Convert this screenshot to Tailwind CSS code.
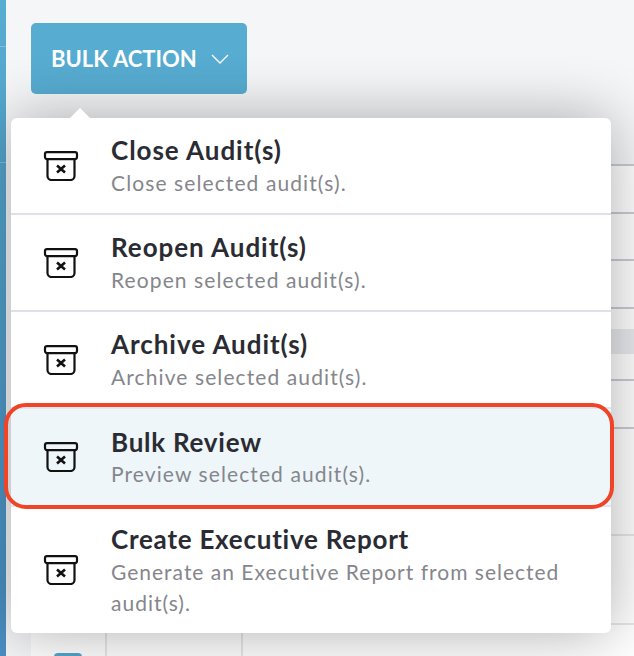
<!doctype html>
<html>
<head>
<meta charset="utf-8">
<script src="https://cdn.jsdelivr.net/npm/@tailwindcss/browser@4"></script>
</head>
<body class="font-['Lato',sans-serif]">
<div class="relative flex w-[634px] h-[656px] overflow-hidden bg-[#f5f6f8]">
  <!-- sidebar edge -->
  <div class="w-[6px] shrink-0 bg-gradient-to-b from-[#57acd1] to-[#4a8fc4]">
    <div class="h-[47px] border-b border-[#7fbedb]"></div>
    <div class="h-[116px] border-b border-[#7fbedb]"></div>
  </div>

  <!-- page behind the menu -->
  <div class="flex-1 pl-[25px] pt-[23px]">
    <button class="flex items-center w-[216px] h-[71px] pl-[20px] gap-[14px] rounded-[5px] bg-[#57acd1] text-white text-[22px] font-bold">
      BULK ACTION
      <svg width="18" height="10" viewBox="0 0 18 10" fill="none" stroke="currentColor" stroke-width="1.4"><path d="M1 1l8 8 8-8"/></svg>
    </button>
    <!-- table rows -->
    <div class="flex flex-col">
      <div class="h-[72px] border-b-2 border-[#c9ccd6]"></div>
      <div class="h-[48px] bg-white border-b-2 border-[#c9ccd6]"></div>
      <div class="h-[47px] bg-white border-b-2 border-[#c9ccd6]"></div>
      <div class="h-[48px] bg-white border-b-2 border-[#c9ccd6]"></div>
      <div class="h-[20px] bg-white"></div>
      <div class="h-[25px] bg-[#e8eaee]"></div>
      <div class="h-[27px] bg-white border-b-2 border-[#c9ccd6]"></div>
      <div class="h-[48px] bg-white border-b-2 border-[#c9ccd6]"></div>
      <div class="h-[107px] bg-white border-b-2 border-[#e6e7ea]"></div>
      <div class="h-[89px] bg-white border-b-2 border-[#e6e7ea]"></div>
      <div class="flex h-[31px] bg-white">
        <div class="flex justify-center w-[76px] pt-[28px] border-r-2 border-[#e6e7ea]">
          <div class="w-[28px] h-[28px] rounded-[4px] bg-[#52a5cb]"></div>
        </div>
        <div class="w-[136px] border-r-2 border-[#e6e7ea]"></div>
      </div>
    </div>
  </div>

  <!-- menu -->
  <div class="absolute left-[11px] top-[118px] w-[600px] h-[515px] rounded-[6px] bg-white shadow-[0_0_60px_rgba(0,0,0,0.32)]">
    <div class="absolute left-[58px] -top-[10px] w-0 h-0 border-x-[11px] border-x-transparent border-b-[11px] border-b-white"></div>

    <div class="flex flex-col">
      <div class="flex items-center h-[97px] border-b-2 border-[#dfe1ea]">
        <div class="w-[100px] shrink-0 flex justify-center">
          <svg width="36" height="30" viewBox="0 0 36 30" fill="none" stroke="#111" stroke-width="2.2" stroke-linejoin="round"><rect x="2" y="1.100" width="32" height="7" rx="2"/><path d="M4.500 8.100V25a4 4 0 0 0 4 4h19a4 4 0 0 0 4-4V8.100"/><path d="M14 14.500l8 7M22 14.500l-8 7" stroke-width="2.600"/></svg>
        </div>
        <div class="pt-[1px]">
          <div class="text-[26px] leading-[32px] font-bold tracking-[0.95px] text-[#2a2b33]">Close Audit(s)</div>
          <div class="mt-[1px] text-[21px] leading-[31px] tracking-[1.1px] text-[#85868c]">Close selected audit(s).</div>
        </div>
      </div>
      <div class="flex items-center h-[97px] border-b-2 border-[#dfe1ea]">
        <div class="w-[100px] shrink-0 flex justify-center">
          <svg width="36" height="30" viewBox="0 0 36 30" fill="none" stroke="#111" stroke-width="2.2" stroke-linejoin="round"><rect x="2" y="1.100" width="32" height="7" rx="2"/><path d="M4.500 8.100V25a4 4 0 0 0 4 4h19a4 4 0 0 0 4-4V8.100"/><path d="M14 14.500l8 7M22 14.500l-8 7" stroke-width="2.600"/></svg>
        </div>
        <div>
          <div class="text-[26px] leading-[32px] font-bold tracking-[0.95px] text-[#2a2b33]">Reopen Audit(s)</div>
          <div class="mt-[1px] text-[21px] leading-[31px] tracking-[1.1px] text-[#85868c]">Reopen selected audit(s).</div>
        </div>
      </div>
      <div class="flex items-center h-[97px] border-b-2 border-[#dfe6ee]">
        <div class="w-[100px] shrink-0 flex justify-center">
          <svg width="36" height="30" viewBox="0 0 36 30" fill="none" stroke="#111" stroke-width="2.2" stroke-linejoin="round"><rect x="2" y="1.100" width="32" height="7" rx="2"/><path d="M4.500 8.100V25a4 4 0 0 0 4 4h19a4 4 0 0 0 4-4V8.100"/><path d="M14 14.500l8 7M22 14.500l-8 7" stroke-width="2.600"/></svg>
        </div>
        <div class="pt-[1px]">
          <div class="text-[26px] leading-[32px] font-bold tracking-[0.95px] text-[#2a2b33]">Archive Audit(s)</div>
          <div class="mt-[1px] text-[21px] leading-[31px] tracking-[1.1px] text-[#85868c]">Archive selected audit(s).</div>
        </div>
      </div>
      <!-- highlighted row -->
      <div class="relative flex items-center h-[98px] bg-[#eef6fa] border-b-2 border-[#dfe6ee]">
        <div class="w-[100px] shrink-0 flex justify-center">
          <svg width="36" height="30" viewBox="0 0 36 30" fill="none" stroke="#111" stroke-width="2.2" stroke-linejoin="round"><rect x="2" y="1.100" width="32" height="7" rx="2"/><path d="M4.500 8.100V25a4 4 0 0 0 4 4h19a4 4 0 0 0 4-4V8.100"/><path d="M14 14.500l8 7M22 14.500l-8 7" stroke-width="2.600"/></svg>
        </div>
        <div>
          <div class="text-[26px] leading-[32px] font-bold tracking-[0.75px] text-[#2a2b33] translate-y-[1px]">Bulk Review</div>
          <div class="mt-[1px] text-[21px] leading-[31px] tracking-[1.1px] text-[#85868c]">Preview selected audit(s).</div>
        </div>
        <div class="absolute -left-[7px] -right-[3px] -top-[6px] -bottom-[4px] rounded-[22px] border-4 border-[#f04327]"></div>
      </div>
      <div class="flex items-center h-[126px]">
        <div class="w-[100px] shrink-0 flex justify-center">
          <svg width="36" height="30" viewBox="0 0 36 30" fill="none" stroke="#111" stroke-width="2.2" stroke-linejoin="round"><rect x="2" y="1.100" width="32" height="7" rx="2"/><path d="M4.500 8.100V25a4 4 0 0 0 4 4h19a4 4 0 0 0 4-4V8.100"/><path d="M14 14.500l8 7M22 14.500l-8 7" stroke-width="2.600"/></svg>
        </div>
        <div class="pr-[40px]">
          <div class="text-[26px] leading-[32px] font-bold tracking-[0.75px] text-[#2a2b33]">Create Executive Report</div>
          <div class="mt-[1px] text-[21px] leading-[31px] tracking-[1px] text-[#85868c]">Generate an Executive Report from selected audit(s).</div>
        </div>
      </div>
    </div>
  </div>
</div>
</body>
</html>
